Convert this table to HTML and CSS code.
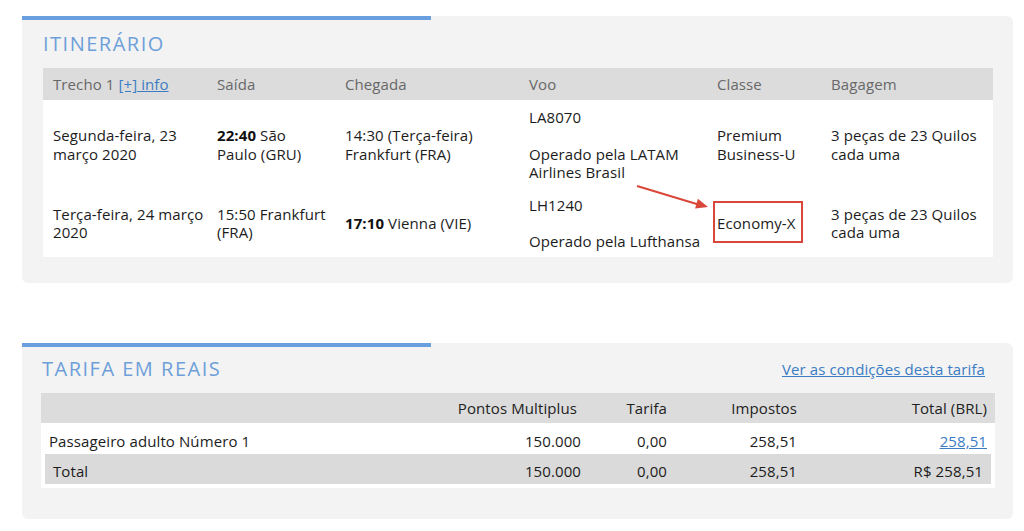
FILE: index.html
```html
<!DOCTYPE html>
<html lang="pt-BR">
<head>
<meta charset="utf-8">
<title>Itinerário</title>
<link rel="stylesheet" href="styles.css">
</head>
<body>
<main class="page">
  <section class="card card-itin">
    <div class="bar"></div>
    <div class="card-body">
      <h2 class="title">ITINERÁRIO</h2>
      <div class="itable">
        <div class="irow ihead">
          <div class="cell">Trecho 1 <a href="#" class="link">[+] info</a></div>
          <div class="cell">Saída</div>
          <div class="cell">Chegada</div>
          <div class="cell">Voo</div>
          <div class="cell">Classe</div>
          <div class="cell">Bagagem</div>
        </div>
        <div class="irow ibody">
          <div class="cell">Segunda-feira, 23<br>março 2020</div>
          <div class="cell"><b>22:40</b> São<br>Paulo (GRU)</div>
          <div class="cell">14:30 (Terça-feira)<br>Frankfurt (FRA)</div>
          <div class="cell">LA8070<br><br>Operado pela LATAM<br>Airlines Brasil</div>
          <div class="cell">Premium<br>Business-U</div>
          <div class="cell">3 peças de 23 Quilos<br>cada uma</div>
        </div>
        <div class="irow ibody">
          <div class="cell">Terça-feira, 24 março<br>2020</div>
          <div class="cell">15:50 Frankfurt<br>(FRA)</div>
          <div class="cell"><b>17:10</b> Vienna (VIE)</div>
          <div class="cell">LH1240<br><br>Operado pela Lufthansa</div>
          <div class="cell"><span class="mark">Economy-X</span></div>
          <div class="cell">3 peças de 23 Quilos<br>cada uma</div>
        </div>
      </div>
    </div>
    <svg class="arrow" width="85" height="35" viewBox="0 0 85 35">
      <line x1="7" y1="6" x2="70" y2="25" stroke="#d8473a" stroke-width="2"/>
      <polygon points="78,27 65.1,28.4 67.9,18.8" fill="#d8473a"/>
    </svg>
  </section>

  <section class="card card-fare">
    <div class="bar"></div>
    <div class="card-body">
      <div class="fare-top">
        <h2 class="title">TARIFA EM REAIS</h2>
        <a href="#" class="link cond">Ver as condições desta tarifa</a>
      </div>
      <div class="ftable">
        <div class="frow fhead">
          <div class="fcell"></div>
          <div class="fcell num pts">Pontos Multiplus</div>
          <div class="fcell num">Tarifa</div>
          <div class="fcell num">Impostos</div>
          <div class="fcell num">Total (BRL)</div>
        </div>
        <div class="fbody">
          <div class="frow fline">
            <div class="fcell">Passageiro adulto Número 1</div>
            <div class="fcell num">150.000</div>
            <div class="fcell num">0,00</div>
            <div class="fcell num">258,51</div>
            <div class="fcell num"><a href="#" class="link">258,51</a></div>
          </div>
          <div class="frow ftotal">
            <div class="fcell">Total</div>
            <div class="fcell num">150.000</div>
            <div class="fcell num">0,00</div>
            <div class="fcell num">258,51</div>
            <div class="fcell num last">R$ 258,51</div>
          </div>
        </div>
      </div>
    </div>
  </section>
</main>
</body>
</html>
```

FILE: styles.css
```css
* { box-sizing: border-box; }
html, body { margin: 0; padding: 0; background: #ffffff; }
body {
  font-family: "Open Sans", "Noto Sans", Arial, sans-serif;
  font-size: 15px;
  line-height: 18.4px;
  letter-spacing: 0.1px;
  color: #1c1c1c;
}
.page {
  padding: 16px 11px 0 22px;
  display: flex;
  flex-direction: column;
  gap: 60px;
}
.card {
  position: relative;
  width: 991px;
  background: #f3f3f3;
  border-radius: 0 6px 6px 6px;
}
.bar {
  width: 409px;
  height: 4px;
  background: #6a9fdf;
}
.title {
  margin: 0;
  font-size: 20px;
  line-height: 24px;
  font-weight: 400;
  color: #6e9fd9;
  letter-spacing: 1.5px;
}
.link {
  color: #3b7cc4;
  text-decoration: underline;
}

/* Itinerary */
.card-itin { height: 267px; }
.card-itin .card-body { padding: 12px 20px 0 21px; }
.card-itin .title { margin-bottom: 12px; }
.itable { background: #ffffff; }
.irow {
  display: grid;
  grid-template-columns: 164px 128px 184px 188px 114px 172px;
  align-items: center;
}
.cell {
  padding: 0 10px;
  white-space: nowrap;
}
.ihead {
  height: 32px;
  padding-top: 1px;
  background: #dcdcdc;
  color: #686868;
}
.ibody { padding: 8px 0 6px; }
.ibody b { font-weight: 700; color: #111; }
.mark { position: relative; }
.mark::after {
  content: "";
  position: absolute;
  left: -4px;
  right: -7px;
  top: -12px;
  bottom: -10px;
  border: 2px solid #d8473a;
}
.arrow {
  position: absolute;
  left: 608px;
  top: 164px;
}

/* Fare */
.card-fare { height: 176px; }
.card-fare .card-body { padding: 10px 18px 0 19px; }
.fare-top {
  display: flex;
  justify-content: space-between;
  align-items: center;
  margin-bottom: 12px;
}
.fare-top .title { margin-left: 1px; }
.cond { margin-right: 10px; }
.ftable { background: #ffffff; }
.frow {
  display: grid;
  grid-template-columns: 1fr 140px 86px 130px 190px;
  align-items: center;
}
.fcell { white-space: nowrap; }
.num { text-align: right; }
.fhead {
  height: 30px;
  background: #dcdcdc;
  padding: 0 8px;
  color: #222;
}
.fhead .pts { padding-right: 4px; }
.fbody { padding: 0 4px 4px 4px; }
.fline {
  height: 31px;
  padding: 5px 4px 0;
}
.ftotal {
  height: 30px;
  background: #dadada;
  padding: 4px 4px 0 8px;
}
.ftotal .last { padding-right: 4px; }
```
